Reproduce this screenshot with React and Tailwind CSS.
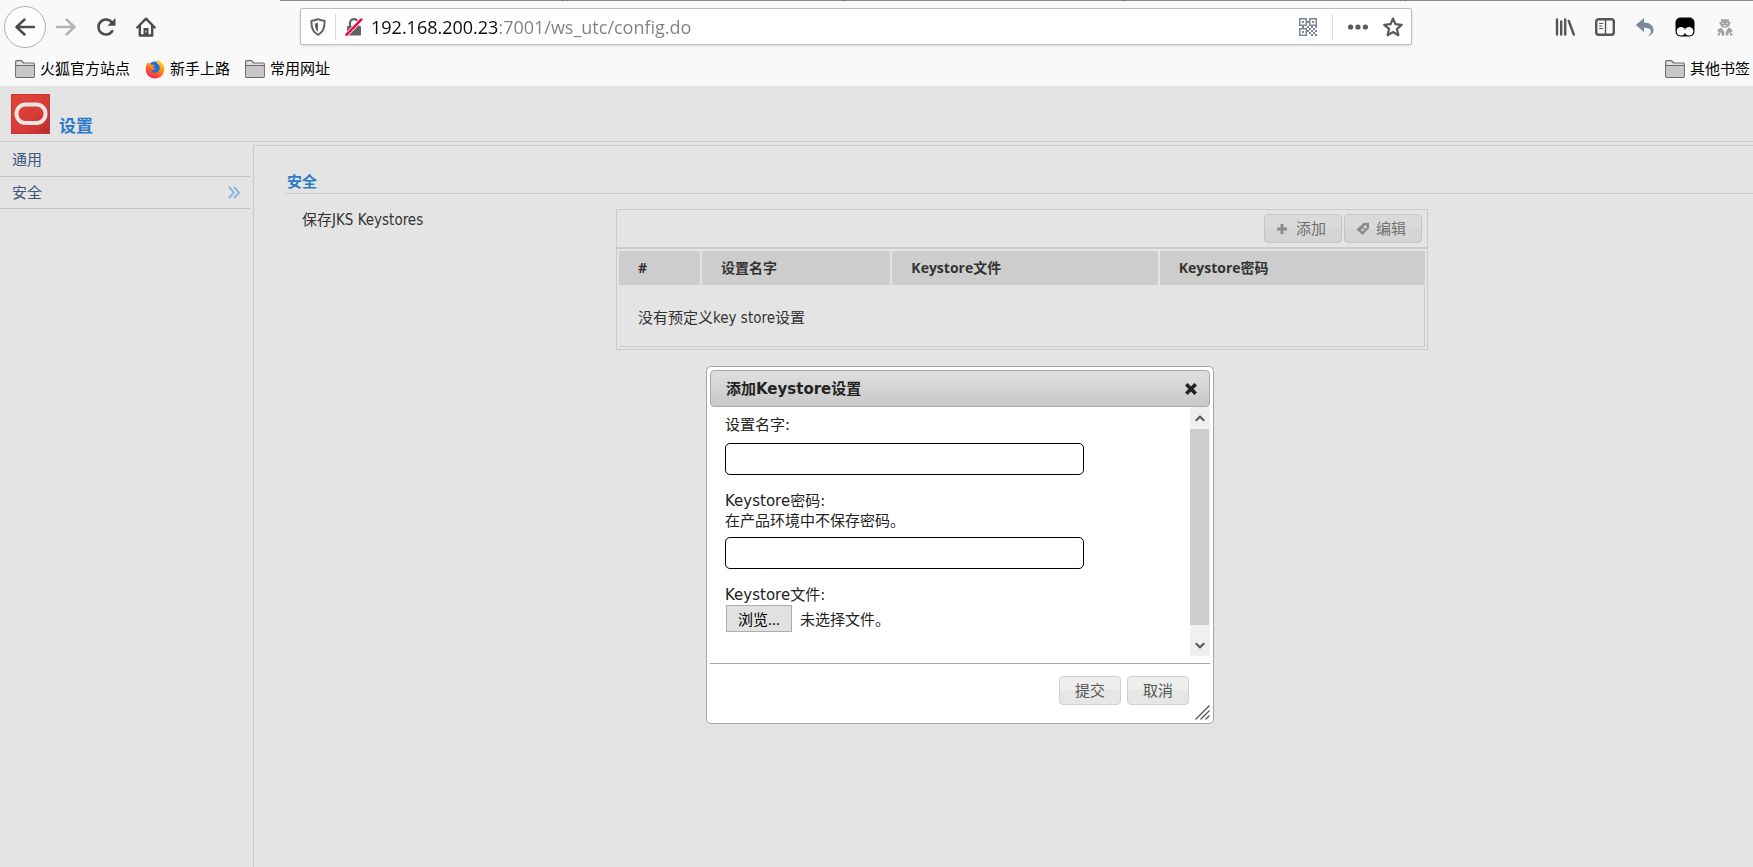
import { useRef, useState } from 'react';

const columns = [
    { label: '#', width: 'w-[81px]' },
    { label: '设置名字', width: 'w-[188px]' },
    { label: 'Keystore文件', width: 'w-[265px]' },
    { label: 'Keystore密码', width: 'w-[265px]' },
];

const pageFont = "font-['DejaVu_Sans_Condensed','Noto_Sans_CJK_SC',sans-serif]";
const dialogFont = "font-['DejaVu_Sans','Noto_Sans_CJK_SC',sans-serif]";

function BackIcon({ className }) {
    return (
        <svg viewBox="0 0 20 20" className={className} fill="none" stroke="currentColor" strokeWidth="2.4" strokeLinecap="round" strokeLinejoin="round">
            <path d="M19 10H2M9.500 2.500L1.500 10l8 7.500" />
        </svg>
    );
}

function ForwardIcon() {
    return (
        <svg viewBox="0 0 20 20" className="size-5" fill="none" stroke="currentColor" strokeWidth="2.4" strokeLinecap="round" strokeLinejoin="round">
            <path d="M1 10h17M10.500 2.500l8 7.500-8 7.500" />
        </svg>
    );
}

function ReloadIcon() {
    return (
        <svg viewBox="0 0 20 20" className="size-5" fill="none" stroke="currentColor" strokeWidth="2.600">
            <path d="M16.200 14.200A7.500 7.500 0 1 1 16 5.500" strokeLinecap="round" />
            <path d="M19.500 1v7.800h-8z" fill="currentColor" stroke="none" />
        </svg>
    );
}

function HomeIcon() {
    return (
        <svg viewBox="0 0 20 20" className="size-5" fill="none" stroke="currentColor" strokeWidth="2.400" strokeLinecap="round" strokeLinejoin="round">
            <path d="M1.300 10.500L10 1.700l8.700 8.800" />
            <path d="M3.800 9v9.500h12.400V9" />
            <path d="M7.500 18v-7h5v7z" fill="currentColor" stroke="none" />
            <path d="M10 14v1" stroke="#f9f9fa" strokeWidth="1.200" />
        </svg>
    );
}

function ShieldIcon() {
    return (
        <svg viewBox="0 0 16 18" className="h-[18px] w-4" fill="none" stroke="#636366" strokeWidth="2">
            <path d="M8 1.200C6 2.200 3.800 2.700 1.500 2.800c-.4 6 .8 11.200 6.500 14 5.700-2.800 6.900-8 6.500-14C12.200 2.700 10 2.200 8 1.200z" strokeLinejoin="round" />
            <path d="M8 4.500c-1.200.6-2 .8-3.200.9 0 3.500.6 6.500 3.200 8.300z" fill="#636366" stroke="none" />
        </svg>
    );
}

function LockIcon() {
    return (
        <svg viewBox="0 0 18 18" className="size-[18px]" fill="none">
            <path d="M5 9V5.200a4 4 0 0 1 8 0V9" stroke="#636366" strokeWidth="2.200" />
            <rect x="2" y="8" width="14" height="9.500" rx="1" fill="#636366" />
            <path d="M.8 17.500L17 .800" stroke="#fff" strokeWidth="4" />
            <path d="M.8 17.500L17 .800" stroke="#ff0039" strokeWidth="2.400" />
        </svg>
    );
}

function QrIcon() {
    return (
        <svg viewBox="0 0 18 18" className="size-[18px]" fill="#7d8894">
            <path fillRule="evenodd" d="M0 0h8v8H0zM1.500 1.500v5h5v-5zM3 3h2v2H3zM10 0h8v8h-8zM11.500 1.500v5h5v-5zM13 3h2v2h-2zM0 10h8v8H0zM1.500 11.500v5h5v-5zM3 13h2v2H3z" />
            <path d="M8 3h2v2H8zM3 8h2v2H3zM8 8h2v2H8zM10 10h2v2h-2zM12 8h2v2h-2zM14 10h2v2h-2zM16 8h2v2h-2zM12 12h2v2h-2zM16 12h2v2h-2zM14 14h2v2h-2zM10 14h2v2h-2zM12 16h2v2h-2zM16 16h2v2h-2zM8 12h2v2H8z" />
        </svg>
    );
}

function DotsIcon() {
    return (
        <svg viewBox="0 0 20 6" className="h-1.5 w-5" fill="#5a5a5e">
            <circle cx="2.600" cy="3" r="2.600" />
            <circle cx="10" cy="3" r="2.600" />
            <circle cx="17.400" cy="3" r="2.600" />
        </svg>
    );
}

function StarIcon() {
    return (
        <svg viewBox="0 0 20 20" className="size-5" fill="none" stroke="#5a5a5e" strokeWidth="2.200" strokeLinejoin="round">
            <path d="M10 1.500l2.500 5.700 6.200.6-4.700 4.100 1.400 6.300L10 15l-5.400 3.200L6 11.900 1.300 7.800l6.200-.6z" />
        </svg>
    );
}

function LibraryIcon() {
    return (
        <svg viewBox="0 0 20 20" className="size-5" fill="none" stroke="#55555a" strokeWidth="2.400" strokeLinecap="round">
            <path d="M2 2.500v15M6.200 4.500v13M10.200 2.500v15M13.800 4l5 13.500" />
        </svg>
    );
}

function SidebarIcon() {
    return (
        <svg viewBox="0 0 20 20" className="size-5" fill="none" stroke="#55555a">
            <rect x="1.200" y="2.200" width="17.600" height="15.600" rx="2.500" strokeWidth="2.400" />
            <path d="M10.500 3v14" strokeWidth="1.400" />
            <path d="M4.200 6.500h4M4.200 9h3M4.200 11.500h4" strokeWidth="1.200" />
        </svg>
    );
}

function UndoIcon() {
    return (
        <svg viewBox="0 0 20 20" className="size-5" fill="#7c8a99">
            <path d="M9 1v4.500c6 .2 9.500 3 9.500 7.500 0 3.300-2.300 5.400-6 6 2.200-1.300 3.400-2.700 3.400-4.600 0-2.300-2.400-3.500-6.900-3.600V15L.800 8z" />
        </svg>
    );
}

function MonkeyIcon() {
    return (
        <svg viewBox="0 0 20 20" className="size-5">
            <rect x=".5" y=".5" width="19" height="19" rx="5" fill="#000" />
            <circle cx="6" cy="14.200" r="4.300" fill="#fff" />
            <circle cx="14" cy="14.200" r="4.300" fill="#fff" />
        </svg>
    );
}

function SpyIcon() {
    return (
        <svg viewBox="0 0 20 20" className="size-5" fill="#a3a3a3">
            <path d="M6.500 1.500l1.500 1 2-.6 2 .6 1.500-1 .6 3.300 2.400.9-1.500.9c0 2.700-2 4.200-5 4.200S5 9.300 5 6.600l-1.500-.9 2.400-.9z" />
            <path d="M6.500 10.500l2.800 4.500v3.500H6.500V16l-.8-.5-.7.800v2.200H2.500V16.500H4v-1.700H2.300c0-2 1.500-3.300 4.200-4.300zM13.500 10.500L10.700 15v3.500h2.800V16l.8-.5.7.8v2.200h2.500V16.500H16v-1.700h1.700c0-2-1.500-3.300-4.200-4.300z" />
            <path d="M7.200 6.300h1.600M11.200 6.300h1.600M8.500 8.800h3" stroke="#f9f9fa" strokeWidth=".9" />
        </svg>
    );
}

function FolderIcon() {
    return (
        <svg viewBox="0 0 20 18" className="h-[18px] w-5" strokeLinejoin="round">
            <path d="M.7 16.500V1.700Q.7.700 1.700.7h4.800l2 2.300h9.800q1 0 1 1v12.500q0 .8-.8.800H1.500q-.8 0-.8-.8z" fill="#e3e3e3" stroke="#6a6a6a" strokeWidth="1.200" />
            <path d="M1.300 6h17.400v10.700H1.300z" fill="#c7c7c9" />
            <path d="M1 5.500h18" stroke="#6a6a6a" />
        </svg>
    );
}

function FirefoxIcon() {
    return (
        <svg viewBox="0 0 20 20" className="size-5">
            <defs>
                <linearGradient id="fox" x1="0.800" y1="0" x2="0.300" y2="1">
                    <stop offset="0" stopColor="#fff13c" />
                    <stop offset="0.400" stopColor="#ff980e" />
                    <stop offset="0.750" stopColor="#ff4f2e" />
                    <stop offset="1" stopColor="#f0206a" />
                </linearGradient>
            </defs>
            <circle cx="10" cy="10" r="7.500" fill="#1b6fe0" />
            <path d="M3.200 3.200C1.300 5.500.6 8 .7 10.500.9 15.700 5 19.500 10 19.500c5.200 0 9.300-4.200 9.300-9.500 0-2.300-.9-4.500-2.300-6C15.500 2.500 13.500 2 13 .3c-1.500 1.200-1.700 2.900-1 4.200 2.200 1.300 3 3.100 2.700 5.200-.4 2.700-2.500 4-4.700 4-2.400 0-4-1.300-4.200-2.800 1.200.6 2.500.3 3.600-.5.700-.4 1.400-.6 1-1.100-.5-.6-1.600-.6-2.400-1 .1-.9.800-1.300 1.700-1.800-1-.9-2-1.200-3.200-1C5.300 5.300 4.200 4.700 3.200 3.200z" fill="url(#fox)" />
        </svg>
    );
}

function OracleLogo() {
    return (
        <svg viewBox="0 0 39 40" className="h-10 w-[39px]">
            <defs>
                <linearGradient id="logo" x1="0" y1="0" x2="1" y2="1">
                    <stop offset="0" stopColor="#e0453c" />
                    <stop offset="0.600" stopColor="#d83a35" />
                    <stop offset="1" stopColor="#b52d30" />
                </linearGradient>
            </defs>
            <rect x=".5" y=".5" width="38" height="39" fill="url(#logo)" stroke="#c0383a" />
            <rect x="5.500" y="10.500" width="29" height="18.500" rx="9" fill="none" stroke="#e8e4e2" strokeWidth="4" />
        </svg>
    );
}

function Bookmark({ icon, children }) {
    return (
        <a href="#" className="flex items-center gap-[5px] text-[15px] leading-5 text-black">
            {icon}
            <span className="pb-0.5">{children}</span>
        </a>
    );
}

function BrowserChrome() {
    const [url, setUrl] = useState('192.168.200.23:7001/ws_utc/config.do');

    return (
        <header className="bg-[#f9f9fa] font-['Open_Sans','Noto_Sans_CJK_SC',sans-serif]">
            <div className="flex h-px pl-[280px]">
                <div className="h-px w-[283px] border-r border-[#555] bg-[#8a8a8a]" />
                <div className="h-px w-[281px] border-r border-[#555] bg-[#8a8a8a]" />
                <div className="h-px w-[281px] border-r border-[#555] bg-[#8a8a8a]" />
                <div className="h-px w-[281px] border-r border-[#555] bg-[#8a8a8a]" />
                <div className="h-px flex-1 bg-[#8a8a8a]" />
            </div>
            <div className="flex h-[51px] items-center pr-[18px] pl-1 text-[#4a4a4f]">
                <button aria-label="Back" className="flex size-[42px] items-center justify-center rounded-full border border-[#b1b1b3] bg-[#fdfdfd]">
                    <BackIcon className="size-5" />
                </button>
                <div className="ml-2.5 flex items-center gap-5">
                    <button aria-label="Forward" className="text-[#b4b4b6]"><ForwardIcon /></button>
                    <button aria-label="Reload"><ReloadIcon /></button>
                    <button aria-label="Home"><HomeIcon /></button>
                </div>

                <div className="mr-[143px] ml-36 flex h-[37px] flex-1 items-center rounded-xs border border-[#bebebe] bg-white pr-2 pl-[9px] shadow-sm">
                    <ShieldIcon />
                    <div className="mx-[9px] h-[26px] w-px bg-[#d7d7db]" />
                    <LockIcon />
                    <input
                        type="text"
                        aria-label="Address"
                        value={url}
                        onChange={(e) => setUrl(e.target.value)}
                        className="ml-2 h-7 min-w-0 flex-1 bg-[linear-gradient(to_right,#0c0c0d_128px,#808080_128px)] bg-clip-text text-[18px] text-transparent caret-black outline-none"
                    />
                    <button aria-label="QR code"><QrIcon /></button>
                    <div className="mx-[15px] h-[26px] w-px bg-[#d7d7db]" />
                    <button aria-label="Page actions"><DotsIcon /></button>
                    <button aria-label="Bookmark this page" className="ml-[15px]"><StarIcon /></button>
                </div>

                <div className="flex items-center gap-5">
                    <button aria-label="Library"><LibraryIcon /></button>
                    <button aria-label="Sidebars"><SidebarIcon /></button>
                    <button aria-label="Undo close tab"><UndoIcon /></button>
                    <button aria-label="Scripts"><MonkeyIcon /></button>
                    <button aria-label="User agent"><SpyIcon /></button>
                </div>
            </div>
            <nav className="flex h-[34px] items-center gap-[15px] pr-[3px] pl-[15px]">
                <Bookmark icon={<FolderIcon />}>火狐官方站点</Bookmark>
                <Bookmark icon={<FirefoxIcon />}>新手上路</Bookmark>
                <Bookmark icon={<FolderIcon />}>常用网址</Bookmark>
                <div className="ml-auto">
                    <Bookmark icon={<FolderIcon />}>其他书签</Bookmark>
                </div>
            </nav>
        </header>
    );
}

function ToolbarButton({ icon, children }) {
    return (
        <button className="flex h-[29px] w-[78px] items-center gap-1.5 rounded-[4px] border border-[#c5c5c5] bg-linear-to-b from-[#dadada] from-50% to-[#d4d4d4] to-50% pl-[11px] text-[15px] leading-5 text-[#707070]">
            {icon}
            {children}
        </button>
    );
}

function KeystorePanel() {
    return (
        <section className="max-w-[812px] flex-1 border border-[#cbcbcb]">
            <div className="flex h-[39px] items-center justify-end gap-0.5 border-b-2 border-[#cbcbcb] pr-[5px]">
                <ToolbarButton
                    icon={
                        <svg viewBox="0 0 14 14" className="size-3.5" fill="#8c8c8c">
                            <path d="M4.500 2h3v3.500H11v3H7.500V12h-3V8.500H1v-3h3.500z" />
                        </svg>
                    }
                >
                    添加
                </ToolbarButton>
                <ToolbarButton
                    icon={
                        <svg viewBox="0 0 14 14" className="size-3.5" fill="#8c8c8c">
                            <path fillRule="evenodd" d="M7.500 1L13 .800 13.200 6 6.500 13 .500 7.500zM9.200 3.500a1.500 1.500 0 1 0 .1 0zM6.800 6.200L5 8l1.500 1.500 1.800-1.800z" />
                        </svg>
                    }
                >
                    编辑
                </ToolbarButton>
            </div>
            <table className="w-full table-fixed border-separate border-spacing-0.5 text-left text-[#333]">
                <thead>
                    <tr>
                        {columns.map((col) => (
                            <th key={col.label} className={`${col.width} h-[34px] bg-[#cdcdcd] pl-[19px] font-['Open_Sans','Noto_Sans_CJK_SC',sans-serif] text-[14px] leading-5 font-bold`}>
                                {col.label}
                            </th>
                        ))}
                    </tr>
                </thead>
                <tbody>
                    <tr>
                        <td colSpan={4} className="h-[60px] border-r border-b border-[#cbcbcb] pt-0.5 pl-[19px] text-[15px] leading-5">
                            没有预定义key store设置
                        </td>
                    </tr>
                </tbody>
            </table>
        </section>
    );
}

function DialogButton({ children }) {
    return (
        <button className="h-[29px] w-[62px] rounded-[4px] border border-[#d0d0d0] bg-linear-to-b from-[#eeeeee] from-50% to-[#e6e6e6] to-50% text-[15px] leading-5 text-[#555]">
            {children}
        </button>
    );
}

function AddKeystoreDialog() {
    const fileRef = useRef(null);

    return (
        <div
            role="dialog"
            aria-labelledby="dialog-title"
            className={`absolute top-[366px] left-[706px] w-[508px] rounded-[5px] border border-[#a6a6a6] bg-white p-[3px] text-[15px] text-[#222] ${dialogFont}`}
        >
            <div className="flex h-[37px] items-center justify-between rounded-[4px] border border-[#aaa] bg-linear-to-b from-[#e0e0e0] to-[#c8c8c8] pr-3 pl-[15px]">
                <h2 id="dialog-title" className="leading-5 font-bold">添加Keystore设置</h2>
                <button aria-label="Close">
                    <svg viewBox="0 0 12 12" className="size-3" stroke="#222" strokeWidth="3.600">
                        <path d="M1.300 1.300l9.400 9.400M10.700 1.300l-9.400 9.400" />
                    </svg>
                </button>
            </div>

            <form onSubmit={(e) => e.preventDefault()}>
                <div className="flex border-b border-[#aaa] pb-[7px]">
                    <div className="h-[249px] flex-1 overflow-hidden pt-2 pl-[15px] leading-5">
                        <label htmlFor="name" className="block">设置名字:</label>
                        <input id="name" type="text" className="mt-2 block h-8 w-[359px] rounded-[5px] border border-black bg-white px-2" />
                        <label htmlFor="password" className="mt-4 block">
                            Keystore密码:
                            <br />
                            在产品环境中不保存密码。
                        </label>
                        <input id="password" type="password" className="mt-1.5 block h-8 w-[359px] rounded-[5px] border border-black bg-white px-2" />
                        <label htmlFor="file" className="mt-4 block">Keystore文件:</label>
                        <div className="flex items-center gap-2 pl-px">
                            <input id="file" ref={fileRef} type="file" className="hidden" />
                            <button type="button" onClick={() => fileRef.current.click()} className="h-[27px] w-[66px] border border-[#adadad] bg-[#e1e1e1] font-['Open_Sans','Noto_Sans_CJK_SC',sans-serif] text-black">
                                浏览...
                            </button>
                            <span className="pt-0.5">未选择文件。</span>
                        </div>
                    </div>
                    <div className="flex w-5 flex-col bg-[#f0f0f0] text-[#505050]">
                        <button type="button" aria-label="Scroll up" className="flex h-[22px] items-center justify-center">
                            <svg viewBox="0 0 10 7" className="h-[7px] w-2.5" fill="none" stroke="currentColor" strokeWidth="2">
                                <path d="M.8 5.800L5 1.600l4.200 4.200" />
                            </svg>
                        </button>
                        <div className="mr-px h-[196px] bg-[#cdcdcd]" />
                        <button type="button" aria-label="Scroll down" className="mt-auto flex h-[21px] items-center justify-center">
                            <svg viewBox="0 0 10 7" className="h-[7px] w-2.5" fill="none" stroke="currentColor" strokeWidth="2">
                                <path d="M.8 1.200L5 5.400l4.200-4.200" />
                            </svg>
                        </button>
                    </div>
                </div>
                <div className="flex h-14 justify-end gap-1.5 pt-3 pr-[21px]">
                    <DialogButton>提交</DialogButton>
                    <DialogButton>取消</DialogButton>
                </div>
            </form>
            <svg viewBox="0 0 15 15" className="absolute right-[3px] bottom-[3px] size-[15px]" stroke="#555" strokeWidth="1.300">
                <path d="M.5 14.500l14-14M5.500 14.500l9-9M10.500 14.500l4-4" />
            </svg>
        </div>
    );
}

export default function App() {
    return (
        <div className={`relative flex min-h-screen flex-col bg-[#e4e4e4] ${pageFont}`}>
            <BrowserChrome />

            <div className="flex h-14 items-end gap-[9px] border-b border-[#cbcbcb] pb-[7px] pl-[11px]">
                <OracleLogo />
                <h1 className="text-[17px] leading-4 font-bold text-[#2f7ac8]">设置</h1>
            </div>

            <div className="flex flex-1">
                <nav className="w-[250px] text-[15px] leading-5 text-[#3f5678]">
                    <a href="#" className="flex h-[35px] items-center border-b border-[#c4c4c4] pt-0.5 pl-3">通用</a>
                    <a href="#" className="flex h-8 items-center justify-between border-b border-[#c4c4c4] pr-2.5 pl-3">
                        安全
                        <svg viewBox="0 0 12 13" className="h-[13px] w-3" fill="none" stroke="#7fb4dc" strokeWidth="1.800">
                            <path d="M.8.800l5 5.700-5 5.700M6 .800l5 5.700-5 5.700" />
                        </svg>
                    </a>
                </nav>
                <main className="mt-[3px] ml-[3px] flex-1 border-t border-l border-[#cbcbcb] pl-[31px]">
                    <h2 className="mt-[26px] border-b border-[#cbcbcb] pb-px pl-0.5 text-[15px] leading-5 font-bold text-[#2f7ac8]">安全</h2>
                    <div className="flex pt-[15px] pl-[17px]">
                        <div className="w-[314px] pt-px text-[15px] leading-5 text-[#333]">保存JKS Keystores</div>
                        <KeystorePanel />
                    </div>
                </main>
            </div>

            <AddKeystoreDialog />
        </div>
    );
}
